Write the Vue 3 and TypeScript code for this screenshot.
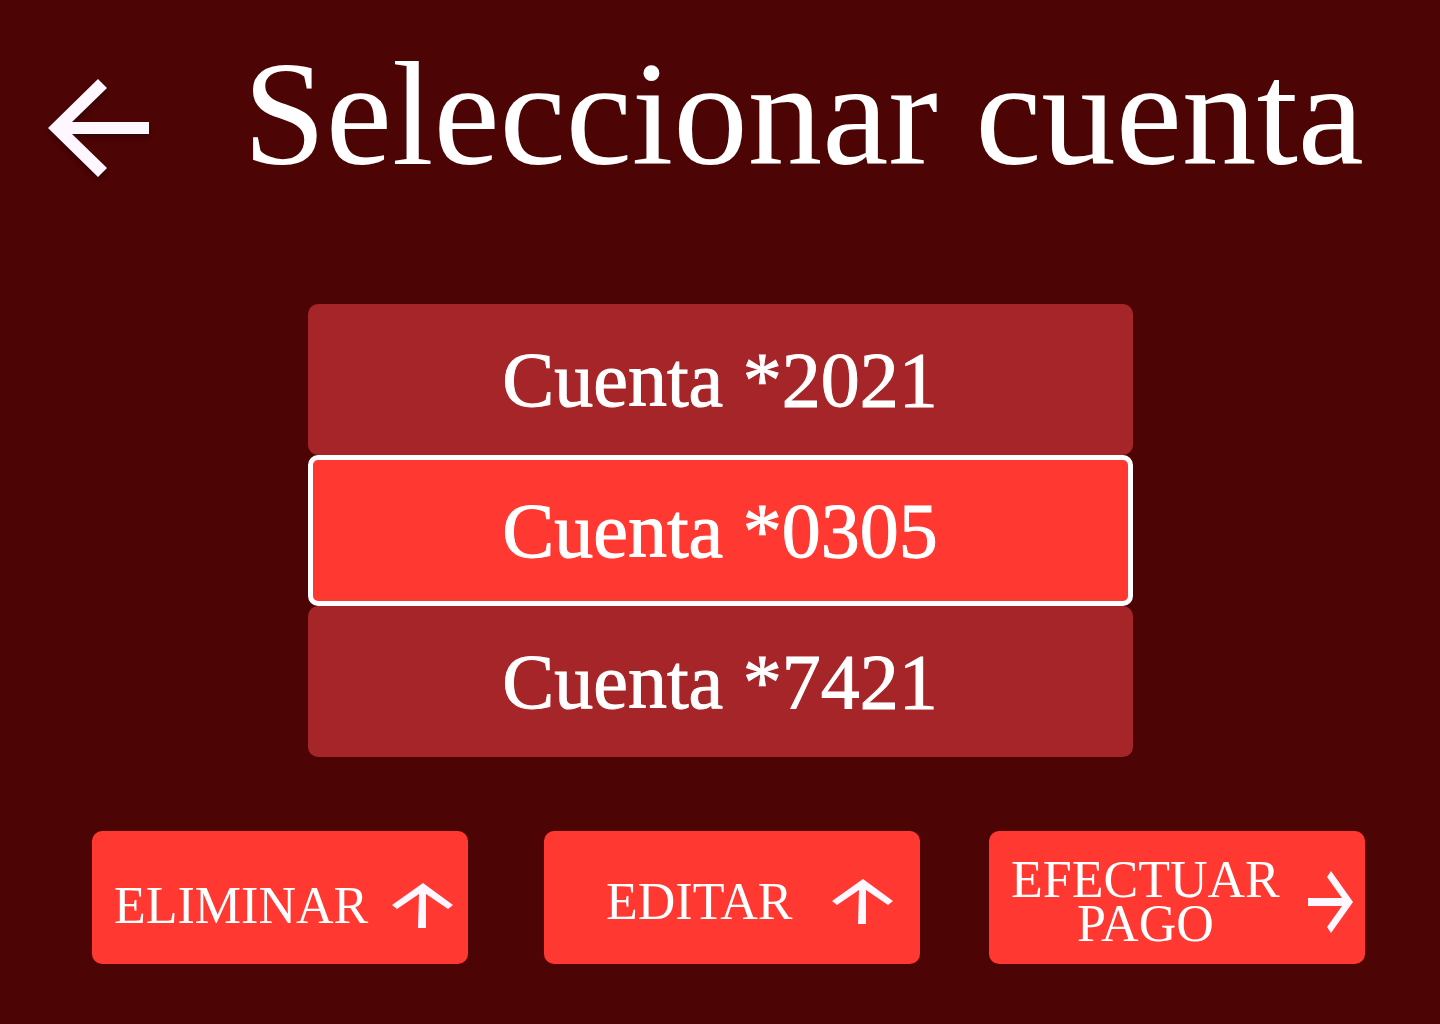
<script setup lang="ts">
import { ref } from 'vue'

interface Action {
  id: string
  lines: string[]
  arrow: 'up' | 'right'
}

const accounts: string[] = ['2021', '0305', '7421']
const selected = ref<string>('0305')

const actions: Action[] = [
  { id: 'remove', lines: ['ELIMINAR'], arrow: 'up' },
  { id: 'edit', lines: ['EDITAR'], arrow: 'up' },
  { id: 'pay', lines: ['EFECTUAR', 'PAGO'], arrow: 'right' },
]
</script>

<template>
  <main class="page">
    <header class="header">
      <button class="back" type="button" aria-label="Volver">
        <svg width="101" height="98" viewBox="0 0 101 98" aria-hidden="true">
          <path d="M0 49 50 0 59 9 24 43H101V55H24L59 89 50 98Z" />
        </svg>
      </button>
      <h1 class="title">Seleccionar cuenta</h1>
    </header>

    <section class="accounts" aria-label="Cuentas">
      <button
        v-for="account in accounts"
        :key="account"
        type="button"
        class="account"
        :class="{ selected: account === selected }"
        :aria-pressed="account === selected"
        @click="selected = account"
      >
        Cuenta *{{ account }}
      </button>
    </section>

    <footer class="actions">
      <button
        v-for="action in actions"
        :key="action.id"
        type="button"
        class="action"
        :class="action.id"
      >
        <span class="label">
          <span v-for="line in action.lines" :key="line" class="line">{{ line }}</span>
        </span>
        <svg v-if="action.arrow === 'up'" width="61" height="45" viewBox="0 0 61 45" aria-hidden="true">
          <path d="M31 0 61 22 56 26 34 11V45H26L27 11 5 26 0 22Z" />
        </svg>
        <svg v-else width="45" height="62" viewBox="0 0 45 62" aria-hidden="true">
          <path d="M45 31 23 62 19 56 34 35H0V27H34L19 6 23 0Z" />
        </svg>
      </button>
    </footer>
  </main>
</template>

<style>
body {
  background: #4c0405;
}
</style>

<style scoped>
.page {
  box-sizing: border-box;
  min-height: 100vh;
  padding: 40px 0 60px;
  background: #4c0405;
  color: #fff;
  font-family: "Liberation Serif", "Times New Roman", serif;
}

button {
  box-sizing: border-box;
  margin: 0;
  padding: 0;
  border: 0;
  color: inherit;
  font-family: inherit;
  cursor: pointer;
}

svg {
  display: block;
  flex: none;
  fill: #fef7ff;
}

.header {
  display: flex;
  align-items: center;
  gap: 94px;
  padding: 0 48px;
}

.back {
  flex: none;
  padding-top: 28px;
  background: none;
}

.back svg {
  overflow: visible;
  filter: drop-shadow(0 4px 2px rgba(0, 0, 0, 0.25));
}

.title {
  margin: 0;
  font-size: 149px;
  font-weight: 400;
  line-height: 148px;
  white-space: nowrap;
}

.accounts {
  display: flex;
  flex-direction: column;
  max-width: 825px;
  margin: 116px auto 0;
}

.account {
  min-height: 151px;
  border-radius: 10px;
  background: #a62528;
  font-size: 78px;
  line-height: 78px;
  -webkit-text-stroke: 1px #fff;
}

.account.selected {
  border: 5px solid #fff;
  background: #ff3932;
}

.actions {
  display: grid;
  grid-template-columns: 1fr 76px 1fr 69px 1fr;
  margin-top: 74px;
  padding: 0 75px 0 92px;
}

.action {
  display: flex;
  align-items: center;
  justify-content: space-between;
  min-height: 133px;
  border-radius: 10px;
  background: #ff3932;
  font-size: 52px;
  line-height: 44px;
}

.line {
  display: block;
}

.remove {
  grid-column: 1;
  padding: 16px 15px 0 22px;
}

.edit {
  grid-column: 3;
  padding: 8px 27px 0 62px;
}

.pay {
  grid-column: 5;
  padding: 8px 12px 0 22px;
}
</style>
